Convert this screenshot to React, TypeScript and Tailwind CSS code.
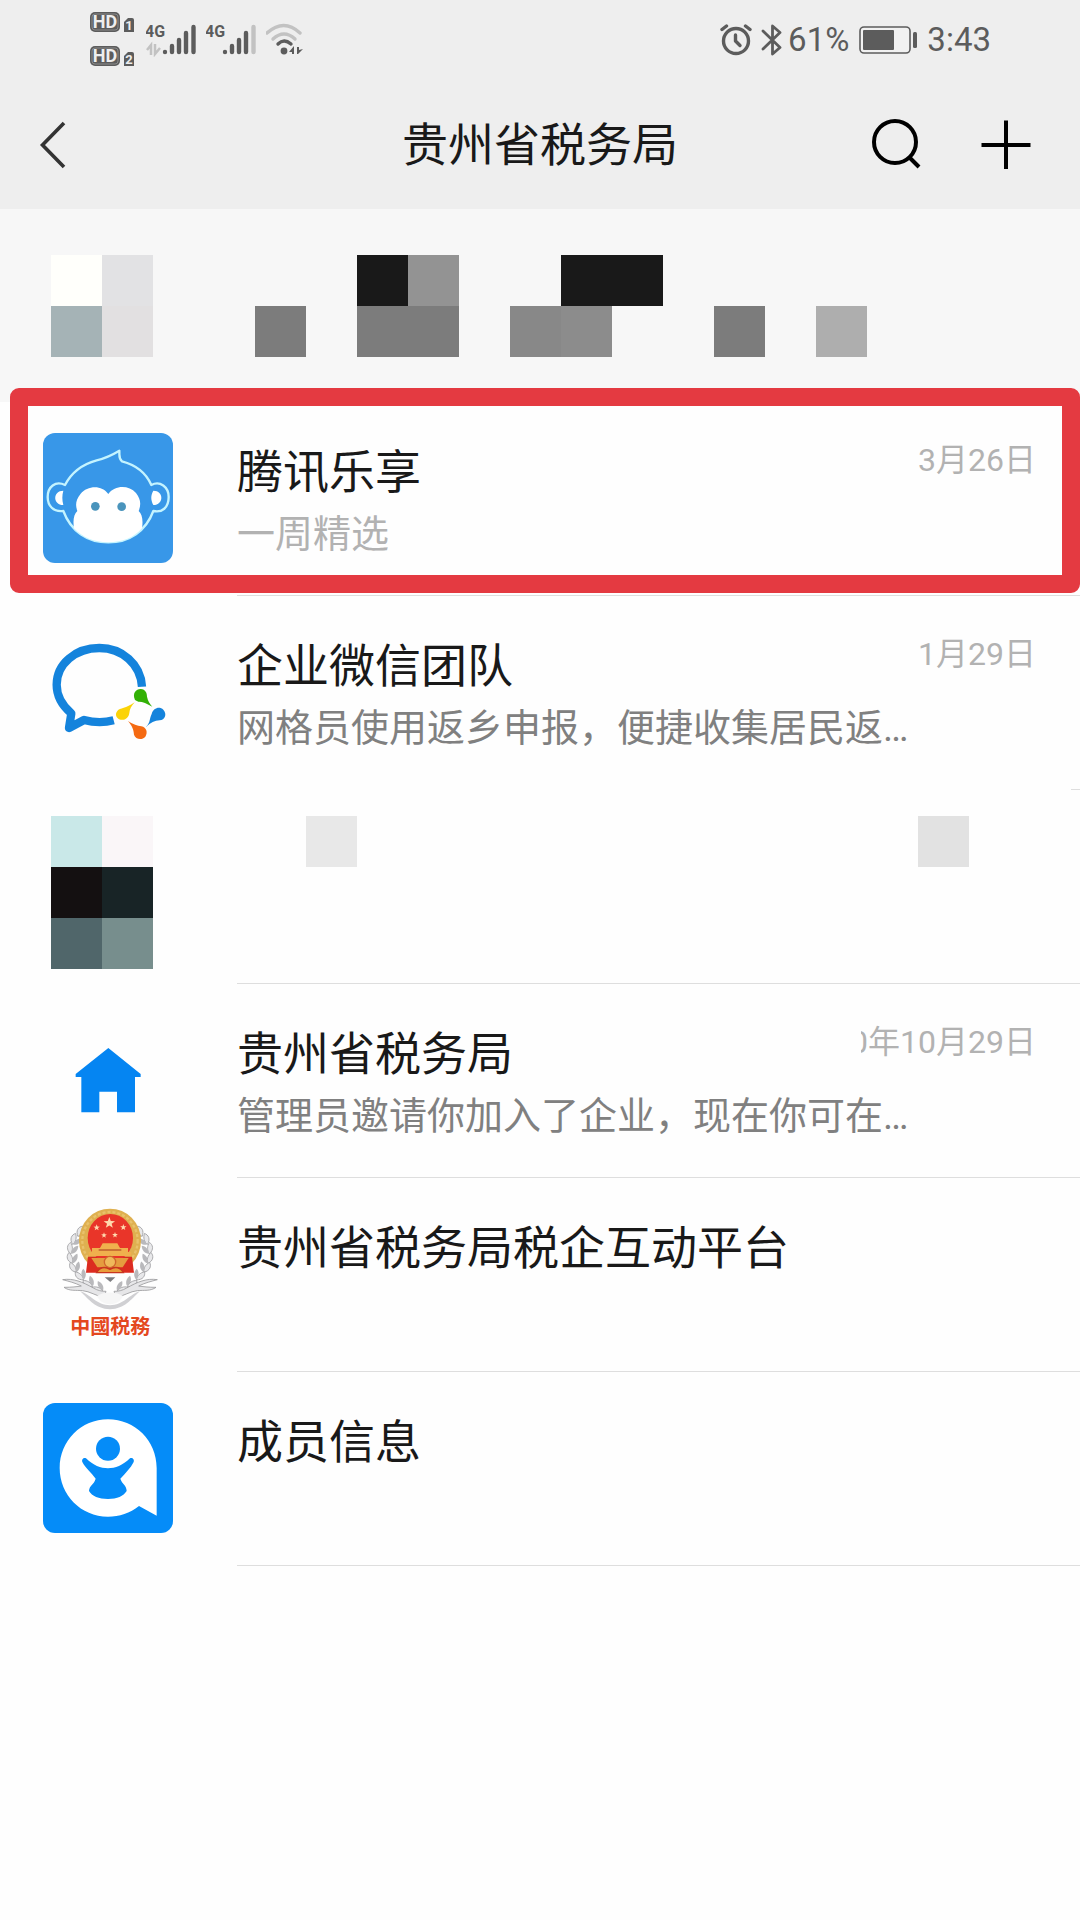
import type { ReactNode } from 'react';

interface Chat {
  name: string;
  message?: string;
  muted?: boolean;
  date?: string;
  icon: ReactNode;
  marked?: boolean;
  divider?: 'full' | 'short';
}

function HdIcon({ sim }: { sim: string }) {
  return (
    <svg width="46" height="22" viewBox="0 0 46 22" className="block">
      <rect x="0" y="0" width="30" height="20" rx="5" fill="#5c5c5c" />
      <rect x="2" y="2" width="26" height="16" rx="3" fill="none" stroke="#8a8a8a" strokeWidth="1" />
      <text x="15" y="16" textAnchor="middle" fontSize="18" fontWeight="700" fill="#eeeeee">HD</text>
      <path d="M34 10 L38 6 H42 Q44 6 44 8 V20 H34 Z" fill="#5c5c5c" />
      <text x="39" y="18" textAnchor="middle" fontSize="13" fontWeight="700" fill="#eeeeee">{sim}</text>
    </svg>
  );
}

function SignalIcon({ weak }: { weak?: boolean }) {
  return (
    <svg width="52" height="34" viewBox="0 0 52 34" className="block">
      <text x="-1" y="14" fontSize="16" fontWeight="700" fill="#5c5c5c">4G</text>
      {!weak && <path d="M1 27 L5 22 V32 M9 21 V31 L14 25" fill="none" stroke="#c2c2c2" strokeWidth="2.5" />}
      <g stroke="#5c5c5c" strokeWidth="4.4" strokeLinecap="round">
        <path d="M19 29V29.1M26 23V29M33 17V29M40 10V29" />
        <path d="M47.500 4V29" stroke={weak ? '#c2c2c2' : '#5c5c5c'} />
      </g>
    </svg>
  );
}

function WifiIcon() {
  return (
    <svg width="40" height="34" viewBox="0 0 40 34" className="block">
      <g fill="none" strokeWidth="3.4" strokeLinecap="round">
        <path d="M1 10 Q18 -5 34 10" stroke="#c2c2c2" />
        <path d="M7 16 Q18 6 29 16" stroke="#c2c2c2" />
        <path d="M12 21 Q18 15 25 21" stroke="#5c5c5c" />
      </g>
      <circle cx="18" cy="28" r="3.4" fill="#5c5c5c" />
      <path d="M23 29 L28 23 V31 H26 V29 Z M31 24 H33 V27 L37 26 L32 31 H31 Z" fill="#5c5c5c" />
    </svg>
  );
}

function StatusBar() {
  return (
    <div className="flex h-20 items-center justify-between pl-[90px] pr-[89px] text-[33px] leading-10 text-[#5c5c5c]">
      <div className="flex items-center">
        <div className="flex flex-col gap-3">
          <HdIcon sim="1" />
          <HdIcon sim="2" />
        </div>
        <div className="ml-2.5 flex gap-2">
          <SignalIcon />
          <SignalIcon weak />
          <WifiIcon />
        </div>
      </div>
      <div className="flex items-center">
        <svg width="32" height="34" viewBox="0 0 32 34" fill="none" stroke="#5c5c5c" strokeLinecap="round" strokeLinejoin="round">
          <circle cx="16" cy="18" r="12.500" strokeWidth="3.4" />
          <path d="M15.500 12 V18 L20 22.500" strokeWidth="3.4" />
          <path d="M2 6.500 L6.500 3 M30 6.500 L25.500 3" strokeWidth="3.4" />
        </svg>
        <svg className="ml-2" width="24" height="34" viewBox="0 0 24 34" fill="none" stroke="#5c5c5c" strokeWidth="2.8" strokeLinecap="round" strokeLinejoin="round">
          <path d="M3 8 L20 24.500 L12.500 31 V3 L20 9.500 L3 26" />
        </svg>
        <span className="ml-1">61%</span>
        <svg className="ml-2.5" width="60" height="28" viewBox="0 0 60 28">
          <rect x="1" y="1" width="50" height="26" rx="4" fill="#f1f1f1" stroke="#5c5c5c" strokeWidth="1.6" />
          <rect x="4" y="4" width="31" height="20" rx="1" fill="#5c5c5c" />
          <rect x="54" y="6" width="4" height="16" rx="1.500" fill="#5c5c5c" />
        </svg>
        <span className="ml-2">3:43</span>
      </div>
    </div>
  );
}

function NavBar() {
  return (
    <div className="grid h-[129px] grid-cols-[1fr_auto_1fr] items-center px-9">
      <button aria-label="返回" className="justify-self-start">
        <svg width="32" height="50" viewBox="0 0 32 50" fill="none" stroke="#333333" strokeWidth="3.6">
          <path d="M28 3 L6.500 25 L28 47" />
        </svg>
      </button>
      <h1 className="text-[46px] leading-[60px] text-[#191919]">贵州省税务局</h1>
      <div className="mr-3 flex gap-14 justify-self-end">
        <button aria-label="搜索">
          <svg width="52" height="52" viewBox="0 0 52 52" fill="none" stroke="#000000" strokeWidth="4">
            <circle cx="23" cy="23" r="21" />
            <path d="M37 38 L47 48" />
          </svg>
        </button>
        <button aria-label="添加">
          <svg width="52" height="52" viewBox="0 0 52 52" fill="none" stroke="#000000" strokeWidth="4">
            <path d="M26 1.500 V50 M1.500 26 H50.500" />
          </svg>
        </button>
      </div>
    </div>
  );
}

function Mosaic({ rows }: { rows: string[][] }) {
  return (
    <div className="pl-[51px]" aria-hidden="true">
      {rows.map((cells, y) => (
        <div key={y} className="flex h-[51px]">
          {cells.map((color, x) => (
            <div key={x} className={`w-[51px] shrink-0 ${color}`} />
          ))}
        </div>
      ))}
    </div>
  );
}

const MonkeyIcon = (
  <svg className="size-full" viewBox="129 158 390 390">
    <rect x="129" y="158" width="390" height="390" rx="36" fill="#3897e8" />
    <g fill="none" stroke="#c4f4ff" strokeWidth="7" strokeLinejoin="round">
      <path d="M195 314 C214 277 246 252 290 240 C318 233 340 222 358 211 C359 224 355 234 366 243 C408 254 438 277 454 314 C480 300 506 320 506 350 C506 382 486 398 460 392 C438 452 388 486 325 486 C262 486 212 452 190 392 C160 396 143 376 143 350 C143 320 166 300 195 314 Z" />
    </g>
    <path d="M190 331 C158 331 158 374 190 374 C186 358 186 346 190 331Z M460 331 C492 331 492 374 460 374 C452 358 452 346 460 331Z" fill="#fff" />
    <path d="M325 341 C305 312 262 316 242 340 C226 360 226 376 232 392 C222 402 218 418 222 444 C248 472 282 486 325 486 C368 486 402 472 426 444 C430 418 426 402 416 392 C424 372 422 356 408 338 C386 314 345 314 325 341Z" fill="#fff" />
    <circle cx="286" cy="378" r="13" fill="#4a94bc" />
    <circle cx="365" cy="379" r="13" fill="#4a94bc" />
  </svg>
);

const WeComIcon = (
  <svg className="size-full" viewBox="129 21 390 390">
    <path d="M426 200 C422 132 366 84 298 84 C226 84 170 132 170 194 C170 230 186 256 214 280 L207 324 L252 300 C282 308 314 308 341 301" fill="none" stroke="#1483dc" strokeWidth="25" strokeLinejoin="round" />
    <path d="M405 240 C396 220 408 207 422 207 C437 208 441 220 441 230 C444 244 450 252 457 260 C440 250 425 244 415 245 Z" fill="#32b005" />
    <path d="M404 247 C394 258 389 268 388 279 C386 294 374 302 362 299 C348 296 344 282 352 273 C360 263 378 266 404 247Z" fill="#fbd307" />
    <path d="M384 303 C400 314 412 317 424 319 C440 322 444 338 436 350 C426 362 406 358 402 344 C401 328 396 318 384 303Z" fill="#f56a12" />
    <path d="M438 321 C452 306 448 296 455 282 C460 264 478 258 490 269 C502 282 495 300 479 301 C464 302 452 308 438 321Z" fill="#1483dc" />
  </svg>
);

const HouseIcon = (
  <svg className="size-full" viewBox="9 -15 390 390">
    <path d="M205 84 L302 162 V171 H285 V277 H231 V215 H178 V277 H124 V171 H107 V162 Z" fill="#0585f2" />
  </svg>
);

const leaves = [
  [126, 128, 30], [108, 150, 20], [98, 176, 5], [98, 204, -10], [106, 230, -25], [124, 254, -40], [148, 276, -52], [176, 292, -65],
];

const star = 'M0 -10 L2.400 -3.200 L9.500 -3 L3.800 1.300 L5.900 8 L0 4 L-5.900 8 L-3.800 1.300 L-9.500 -3 L-2.400 -3.200 Z';

const TaxEmblem = (
  <svg className="size-full overflow-visible" viewBox="9 57 390 390">
    {['', 'translate(420 0) scale(-1 1)'].map((flip) => (
      <g key={flip} transform={flip}>
        {leaves.map(([x, y, angle]) => (
          <g key={y} transform={`translate(${x} ${y}) rotate(${angle})`}>
            <path d="M-5 16 C-20 4 -18 -10 -8 -18 C0 -8 2 6 -5 16Z" fill="#e8e8ea" stroke="#a3a3a6" strokeWidth="2.500" />
            <path d="M-3 16 C-4 2 4 -8 16 -10 C17 2 10 14 -3 16Z" fill="#b9b9bc" />
          </g>
        ))}
        <path d="M68 269 C100 264 128 276 160 294 C174 302 184 304 198 304 L192 322 C168 318 150 304 128 302 C108 300 88 304 72 292 C94 292 112 290 124 288 C104 278 86 274 68 269Z" fill="#e6e6e8" stroke="#9b9b9e" strokeWidth="2.500" />
        <path d="M120 304 C150 312 170 346 210 346 V358 C164 356 150 330 120 304Z" fill="#d0d0d3" />
      </g>
    ))}
    <path d="M170 318 C196 304 224 304 250 318 L238 334 C220 346 200 346 182 334Z" fill="#f6f6f6" />
    <path d="M194 262 H226 L211 276Z" fill="#7d7d80" />
    <ellipse cx="210" cy="152" rx="93" ry="96" fill="#dfb050" />
    <ellipse cx="210" cy="152" rx="83" ry="86" fill="none" stroke="#e9c26c" strokeWidth="7" strokeDasharray="9 6" />
    <path d="M144 200 L138 248 H282 L276 200Z" fill="#dc2b20" />
    <ellipse cx="211" cy="144" rx="68" ry="72" fill="#e93529" />
    <g fill="#ffd9ae">
      <path d={star} transform="translate(208 99) scale(1.800)" />
      <path d={star} transform="translate(170 113)" />
      <path d={star} transform="translate(250 112)" />
      <path d={star} transform="translate(192 136) scale(.9)" />
      <path d={star} transform="translate(225 135) scale(.9)" />
    </g>
    <path d="M188 160 H232 L240 174 H264 V186 H274 V198 H146 V186 H156 V174 H180Z" fill="#f0b04d" />
    <path d="M176 180 H244" stroke="#b9542a" strokeWidth="4" />
    <path d="M154 204 H266 L248 232 H172Z" fill="#e59c3f" />
    <circle cx="210" cy="216" r="17" fill="#efb95b" stroke="#d0662c" strokeWidth="4" />
    <path d="M170 248 C182 228 196 230 210 238 C224 230 238 228 250 248Z" fill="#e89c3a" stroke="#c9351f" strokeWidth="4" />
    <text x="211" y="433" textAnchor="middle" fontSize="60" fontWeight="700" fill="#e4481f">中國税務</text>
  </svg>
);

const MemberIcon = (
  <svg className="size-full" viewBox="39 39 390 390">
    <rect x="39" y="39" width="390" height="390" rx="36" fill="#058cf8" />
    <path d="M234 88 C315 88 380 152 380 234 V377 L327 348 C300 370 268 380 234 380 C153 380 89 315 89 234 C89 153 153 88 234 88Z" fill="#fff" />
    <circle cx="234" cy="176" r="36" fill="#058cf8" />
    <path d="M168 205 C190 226 212 235 234 235 C256 235 278 226 300 205 C307 202 314 208 311 216 C302 234 286 250 271 266 C276 282 290 286 290 303 C280 319 262 327 234 327 C206 327 186 319 177 303 C178 286 192 284 197 266 C184 248 166 234 157 216 C154 208 161 202 168 205Z" fill="#058cf8" />
  </svg>
);

const chats: Chat[] = [
  { name: '腾讯乐享', message: '一周精选', muted: true, date: '3月26日', icon: MonkeyIcon, marked: true },
  { name: '企业微信团队', message: '网格员使用返乡申报，便捷收集居民返…', date: '1月29日', icon: WeComIcon, divider: 'short' },
];

const apps: Chat[] = [
  { name: '贵州省税务局', message: '管理员邀请你加入了企业，现在你可在…', date: '0年10月29日', icon: HouseIcon },
  { name: '贵州省税务局税企互动平台', icon: TaxEmblem },
  { name: '成员信息', icon: MemberIcon },
];

const pinnedMosaic = [
  ['bg-[#fffffb]', 'bg-[#e2e2e4]', '', '', '', '', 'bg-[#191919]', 'bg-[#939393]', '', '', 'bg-[#191919]', 'bg-[#191919]'],
  ['bg-[#a5b3b6]', 'bg-[#e2e0e1]', '', '', 'bg-[#7c7c7c]', '', 'bg-[#7c7c7c]', 'bg-[#7c7c7c]', '', 'bg-[#888888]', 'bg-[#8c8c8c]', '', '', 'bg-[#7c7c7c]', '', 'bg-[#aeaeae]'],
];

const hiddenMosaic = [
  ['bg-[#c9e8e8]', 'bg-[#faf6f8]', '', '', '', 'bg-[#e8e8e8]', '', '', '', '', '', '', '', '', '', '', '', 'bg-[#e2e2e2]'],
  ['bg-[#141011]', 'bg-[#182426]'],
  ['bg-[#50666a]', 'bg-[#778e8d]'],
];

function ChatRow({ chat }: { chat: Chat }) {
  return (
    <li className="relative">
      <button className="flex h-[194px] w-full gap-16 pl-[43px] text-left">
        <span className="mt-[31px] block size-[130px] shrink-0">{chat.icon}</span>
        <span className="flex h-full min-w-0 flex-1 flex-col">
          <span className="flex flex-1 items-start justify-between pr-11">
            <span className="flex flex-col gap-1.5 whitespace-nowrap pt-10">
              <span className="text-[46px] leading-[60px] text-[#191919]">{chat.name}</span>
              {chat.message && (
                <span className={`text-[38px] leading-[52px] ${chat.muted ? 'text-[#b2b2b2]' : 'text-[#808080]'}`}>{chat.message}</span>
              )}
            </span>
            {chat.date && (
              <span className="-ml-12 mt-[38px] flex max-w-[175px] shrink-0 justify-end overflow-hidden whitespace-nowrap text-[32px] leading-10 text-[#b2b2b2]">
                <span className="shrink-0">{chat.date}</span>
              </span>
            )}
          </span>
          <span className={chat.divider === 'short' ? 'ml-auto h-px w-[9px] bg-[#dedede]' : 'h-px w-full bg-[#dedede]'} />
        </span>
      </button>
      {chat.marked && (
        <div className="pointer-events-none absolute -top-3.5 bottom-[3px] left-2.5 right-0 rounded-[9px] border-[18px] border-[#e43a41]" />
      )}
    </li>
  );
}

export default function App() {
  return (
    <div className="min-h-screen overflow-x-hidden bg-[#fefefe] font-[Roboto,'Noto_Sans_CJK_SC',sans-serif]">
      <header className="bg-[#eeeeee]">
        <StatusBar />
        <NavBar />
      </header>
      <ul>
        <li className="h-[193px] bg-[#f7f7f7] pt-[46px]">
          <Mosaic rows={pinnedMosaic} />
        </li>
        {chats.map((chat) => <ChatRow key={chat.name} chat={chat} />)}
        <li className="flex h-[194px] flex-col justify-between pt-[26px]">
          <Mosaic rows={hiddenMosaic} />
          <div className="ml-[237px] h-px bg-[#dedede]" />
        </li>
        {apps.map((chat) => <ChatRow key={chat.name} chat={chat} />)}
      </ul>
    </div>
  );
}
